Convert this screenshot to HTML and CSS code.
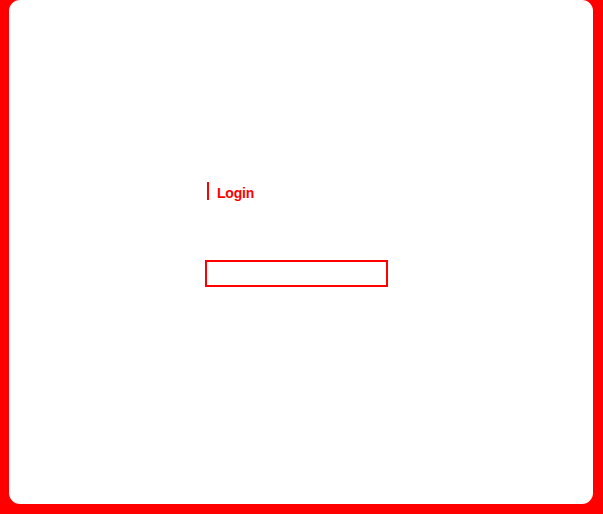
FILE: index.html
```html
<!DOCTYPE html>
<html>
<head>
<meta charset="utf-8">
<link rel="stylesheet" href="styles.css">
</head>
<body>
<div class="card">
  <div class="form">
    <div class="title"><span class="bar"></span><span class="label">Login</span></div>
    <div class="input"></div>
  </div>
</div>
</body>
</html>
```
FILE: styles.css
```css
html, body {
  margin: 0;
  padding: 0;
  background: #ff0000;
  height: 100%;
  overflow: hidden;
}
.card {
  margin-left: 9px;
  width: 584px;
  height: 504px;
  background: #ffffff;
  border-radius: 11px;
  box-sizing: border-box;
  padding: 182px 0 0 196px;
}
.form {
  display: flex;
  flex-direction: column;
  gap: 60px;
}
.title {
  display: flex;
  align-items: center;
  height: 18px;
  padding-left: 2px;
  gap: 8px;
}
.bar {
  width: 2px;
  height: 18px;
  background: #ff0000;
}
.label {
  font-family: "Liberation Sans", Arial, sans-serif;
  font-weight: bold;
  font-size: 14px;
  color: #ff0000;
  line-height: 18px;
  padding-top: 3px;
  letter-spacing: -0.2px;
}
.input {
  width: 183px;
  height: 27px;
  box-sizing: border-box;
  border: 2px solid #ff0000;
}
```
